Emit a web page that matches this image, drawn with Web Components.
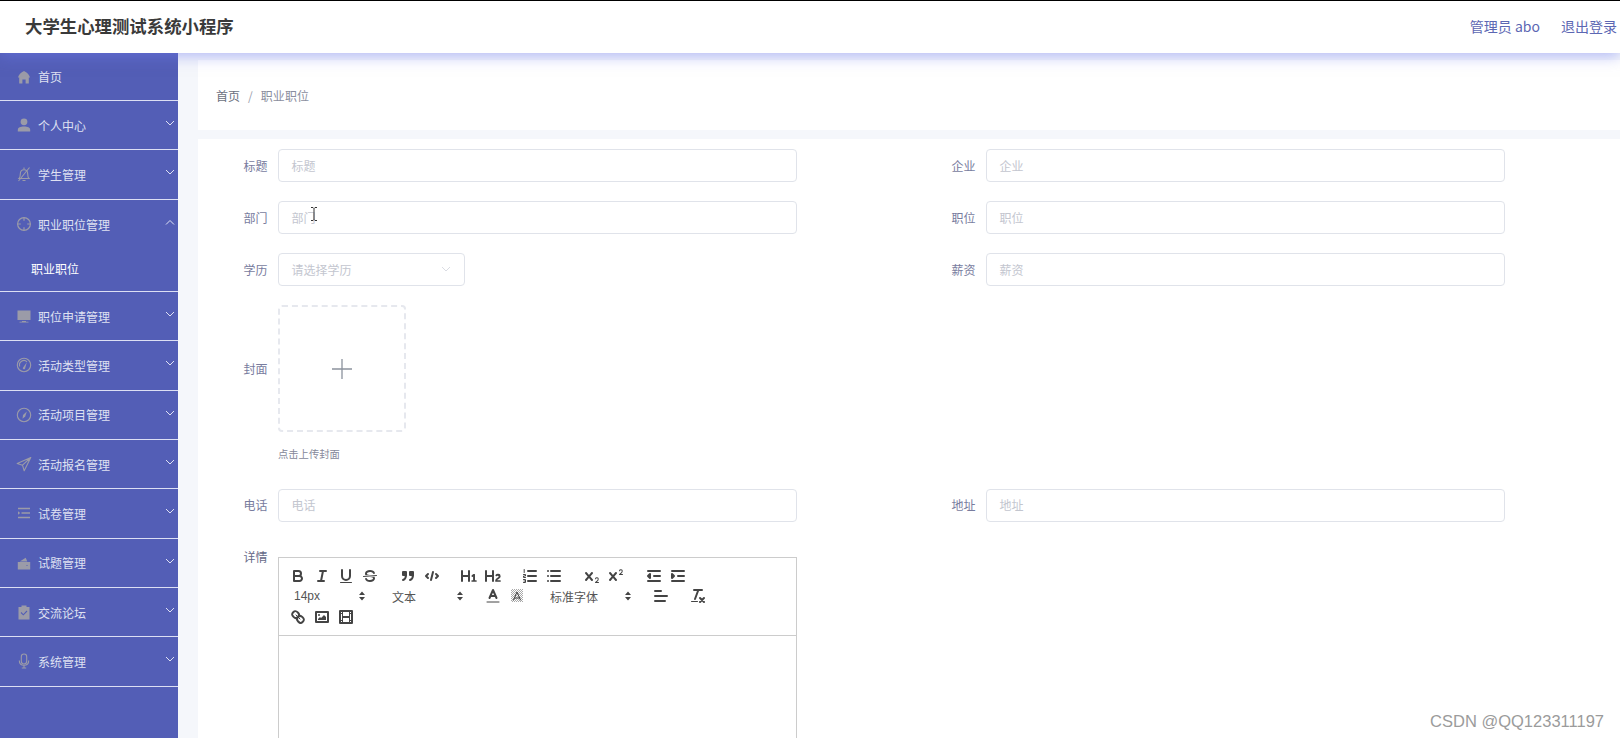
<!DOCTYPE html>
<html lang="zh">
<head>
<meta charset="utf-8">
<title>大学生心理测试系统小程序</title>
<style>
    html, body { margin: 0; height: 100%; overflow: hidden; background: #fff; }
    body { font-family: "Noto Sans CJK SC", "Liberation Sans", sans-serif; }
</style>
</head>
<body>
<app-shell>
    <app-header slot="header" title="大学生心理测试系统小程序" user="管理员 abo" logout="退出登录"></app-header>
    <side-menu slot="side">
        <menu-item first icon="home" label="首页" plain></menu-item>
        <menu-item icon="user" label="个人中心"></menu-item>
        <menu-item icon="belloff" label="学生管理"></menu-item>
        <menu-item icon="aim" label="职业职位管理" open>
            <menu-sub>职业职位</menu-sub>
        </menu-item>
        <menu-item icon="monitor" label="职位申请管理"></menu-item>
        <menu-item icon="gauge" label="活动类型管理"></menu-item>
        <menu-item icon="compass" label="活动项目管理"></menu-item>
        <menu-item icon="send" label="活动报名管理"></menu-item>
        <menu-item icon="list" label="试卷管理"></menu-item>
        <menu-item icon="wallet" label="试题管理"></menu-item>
        <menu-item icon="claim" label="交流论坛"></menu-item>
        <menu-item icon="mic" label="系统管理"></menu-item>
    </side-menu>
    <bread-crumb slot="main" home="首页" current="职业职位"></bread-crumb>
    <edit-form slot="main">
        <form-field label="标题" placeholder="标题"></form-field>
        <form-field label="企业" placeholder="企业"></form-field>
        <form-field label="部门" placeholder="部门" cursor></form-field>
        <form-field label="职位" placeholder="职位"></form-field>
        <form-field label="学历" placeholder="请选择学历" select></form-field>
        <form-field label="薪资" placeholder="薪资"></form-field>
        <upload-field class="wide" label="封面" hint="点击上传封面"></upload-field>
        <form-field class="phone" label="电话" placeholder="电话"></form-field>
        <form-field class="phone" label="地址" placeholder="地址"></form-field>
        <editor-field class="wide" label="详情"></editor-field>
    </edit-form>
</app-shell>
<water-mark>CSDN @QQ123311197</water-mark>

<script>
/* Menu icons, all on a 16 box */
const MENU_ICONS = {
    home: `<path fill="currentColor" d="M8 2C5 3.4 2.400 6 2 8.600h1.200v5.900h3.200v-4h3.200v4h3.200V8.600H14C13.600 6 11 3.400 8 2z"/>`,
    user: `<circle fill="currentColor" cx="8" cy="4.800" r="3.400"/><path fill="currentColor" d="M1.800 14.500V13c0-2.500 2.600-3.400 6.200-3.400s6.200.9 6.200 3.400v1.500z"/>`,
    belloff: `<g fill="none" stroke="currentColor" stroke-width="1.100"><path d="M3 12.500c1-1 1.300-2.200 1.300-4.500 0-2.400 1.500-4.300 3.700-4.300S11.700 5.600 11.700 8c0 2.300.3 3.500 1.300 4.500z"/><path d="M6.500 14.500h3M8 1.500v2M13.500 1.500 2.500 15"/></g>`,
    aim: `<g fill="none" stroke="currentColor" stroke-width="1.200"><circle cx="8" cy="8" r="6.400"/><path d="M8 1.600v3.200M8 11.200v3.200M1.600 8h3.200M11.200 8h3.200"/></g>`,
    monitor: `<path fill="currentColor" d="M1.500 2.500h13v9.500h-13zM6 13h4v.8h2.500v.7h-9v-.7H6z"/>`,
    gauge: `<g fill="none" stroke="currentColor" stroke-width="1.100"><circle cx="8" cy="8" r="6.700"/><path d="M3.800 9.500A4.400 4.400 0 0 1 11 4.800"/></g><path fill="currentColor" d="M10.800 5.200 9 11.800a1.200 1.200 0 0 1-2.200-.8z"/>`,
    compass: `<circle fill="none" stroke="currentColor" stroke-width="1.100" cx="8" cy="8" r="6.700"/><path fill="currentColor" d="M10.800 4.400 9.200 9.400 6.500 11.800 7 8z"/>`,
    send: `<path fill="none" stroke="currentColor" stroke-width="1.100" stroke-linejoin="round" d="M14.800 1.500 1.200 7.500l5.300 1.700 1.700 5.600zM14.800 1.500 6.500 9.200"/>`,
    list: `<path fill="currentColor" d="M2 2.800h12V4.200H2zM5.500 7.300H14v1.400H5.500zM2 11.800h12v1.400H2zM2 6.200v3.600L4.200 8z"/>`,
    wallet: `<path fill="currentColor" d="M1.800 7h12.400v7.500H1.800zM3.800 6.500 9.700 2.800l1.600 3.700zM11 9.500h3.200v2H11a1 1 0 0 1 0-2z"/><circle cx="11" cy="10.500" r=".6" fill="#535eb6"/>`,
    claim: `<path fill="currentColor" d="M2.500 3H5.500V1.500h5V3h3v12.500h-11z"/><path fill="none" stroke="#535eb6" stroke-width="1.100" d="M5 8.500l2.300 2.300L11 7"/>`,
    mic: `<g fill="none" stroke="currentColor" stroke-width="1.100"><rect x="5.300" y="1" width="5.400" height="10" rx="2.700"/><path d="M3.300 7.500c0 3 2 4.800 4.700 4.800s4.700-1.800 4.700-4.800M8 12.300v2.700M5.800 15h4.400"/></g>`,
};

/* Editor toolbar icons, drawn on an 18 box */
const QL_ICONS = {
    bold: `<path class="s" d="M5,4H9.500A2.500,2.500,0,0,1,12,6.500v0A2.500,2.500,0,0,1,9.500,9H5V4Z"/><path class="s" d="M5,9h5.500A2.500,2.500,0,0,1,13,11.500v0A2.500,2.500,0,0,1,10.500,14H5V9Z"/>`,
    italic: `<path class="s" d="M7 4H13M5 14H11M8 14 10 4"/>`,
    underline: `<path class="s" d="M5,3V9a4.012,4.012,0,0,0,4,4H9a4.012,4.012,0,0,0,4-4V3"/><rect class="f" height="1" rx="0.500" width="12" x="3" y="15"/>`,
    strike: `<path class="t" d="M15.500 8.500 2.500 9.500"/><path class="f" d="M9.007,8C6.542,7.791,6,7.519,6,6.500,6,5.792,7.283,5,9,5c1.571,0,2.765.679,2.969,1.309a1,1,0,0,0,1.900-.617C13.356,4.106,11.354,3,9,3,6.200,3,4,4.538,4,6.500a3.200,3.200,0,0,0,.5,1.843Z"/><path class="f" d="M8.984,10C11.457,10.208,12,10.479,12,11.500c0,.708-1.283,1.500-3,1.500-1.571,0-2.765-.679-2.969-1.309a1,1,0,1,0-1.900.617C4.644,13.894,6.646,15,9,15c2.800,0,5-1.538,5-3.500a3.200,3.200,0,0,0-.5-1.843Z"/>`,
    quote: `<rect class="f s" height="3" width="3" x="4" y="5"/><rect class="f s" height="3" width="3" x="11" y="5"/><path class="s" d="M7,8c0,4.031-3,5-3,5"/><path class="s" d="M14,8c0,4.031-3,5-3,5"/>`,
    code: `<path class="s" d="M5 7 3 9 5 11M13 7 15 9 13 11M10 5 8 13"/>`,
    h1: `<path class="f" d="M10,4V14a1,1,0,0,1-2,0V10H3v4a1,1,0,0,1-2,0V4A1,1,0,0,1,3,4V8H8V4a1,1,0,0,1,2,0Zm6.068,9.209H14.990V7.599a.541.541,0,0,0-.605-.605h-.627a1.011,1.011,0,0,0-.748.297L11.645,8.566a.544.544,0,0,0-.022.858l.286.308a.539.539,0,0,0,.847.033l.099-.088a1.214,1.214,0,0,0,.242-.353h.022s-.011.309-.011.605V13.209H12.041a.541.541,0,0,0-.605.605v.439a.541.541,0,0,0,.605.605h4.027a.541.541,0,0,0,.605-.605v-.439A.541.541,0,0,0,16.068,13.209Z"/>`,
    h2: `<path class="f" d="M16.740,13.814v.439a.541.541,0,0,1-.605.605H11.855a.584.584,0,0,1-.649-.605V14.013c0-2.905,3.399-3.422,3.399-4.555a.777.777,0,0,0-.847-.781,1.177,1.177,0,0,0-.836.385c-.275.264-.561.374-.858.132l-.429-.341c-.308-.242-.385-.518-.154-.814a2.972,2.972,0,0,1,2.454-1.177,2.454,2.454,0,0,1,2.684,2.409c0,2.453-3.179,2.927-3.278,3.938h2.794A.541.541,0,0,1,16.740,13.814ZM9,3A1,1,0,0,0,8,4V8H3V4A1,1,0,0,0,1,4V14a1,1,0,0,0,2,0V10H8v4a1,1,0,0,0,2,0V4A1,1,0,0,0,9,3Z"/>`,
    ol: `<path class="s" d="M7 4H15M7 9H15M7 14H15"/><path class="t" d="M3.200 2.500v3M2.500 7.500h2v1.500h-2v1.500h2M2.500 12.500h2v3h-2M3 14h1.500"/>`,
    ul: `<path class="s" d="M6 4H15M6 9H15M6 14H15M3 4h.01M3 9h.01M3 14h.01"/>`,
    sub: `<path class="f" d="M15.500,15H13.861a3.858,3.858,0,0,0,1.914-2.975,1.800,1.800,0,0,0-1.600-1.751A1.921,1.921,0,0,0,12.021,11.700a.5,.5,0,1,0,.957.291.914,.914,0,0,1,1.053-.725.81,.81,0,0,1,.744.762c0,1.076-1.170,1.870-1.940,2.431A1.456,1.456,0,0,0,12,15.500a.5,.5,0,0,0,.5.5h3A.5,.5,0,0,0,15.500,15Z"/><path class="f" d="M9.650,5.241a1,1,0,0,0-1.409.108L6,7.964,3.759,5.349A1,1,0,0,0,2.241,6.649L4.684,9.500,2.241,12.350A1,1,0,0,0,3.759,13.650L6,11.036,8.241,13.650a1,1,0,1,0,1.518-1.300L7.316,9.500,9.759,6.651A1,1,0,0,0,9.650,5.241Z"/>`,
    sup: `<path class="f" d="M15.500,7H13.861a4.015,4.015,0,0,0,1.914-2.975,1.800,1.800,0,0,0-1.600-1.751A1.922,1.922,0,0,0,12.021,3.700a.5,.5,0,1,0,.957.291.917,.917,0,0,1,1.053-.725.81,.81,0,0,1,.744.762c0,1.077-1.164,1.925-1.934,2.486A1.423,1.423,0,0,0,12,7.500a.5,.5,0,0,0,.5.5h3A.5,.5,0,0,0,15.500,7Z"/><path class="f" d="M9.650,5.241a1,1,0,0,0-1.409.108L6,7.964,3.759,5.349A1,1,0,0,0,2.241,6.649L4.684,9.500,2.241,12.350A1,1,0,0,0,3.759,13.650L6,11.036,8.241,13.650a1,1,0,1,0,1.518-1.300L7.316,9.500,9.759,6.651A1,1,0,0,0,9.650,5.241Z"/>`,
    outdent: `<path class="s" d="M3 14H15M3 4H15M9 9H15"/><polygon class="f s" points="5 7 5 11 3 9"/>`,
    indent: `<path class="s" d="M3 14H15M3 4H15M9 9H15"/><polygon class="f s" points="3 7 3 11 5 9"/>`,
    color: `<path class="s" d="M5.500 11 9 3 12.500 11M11.630 9H6.380"/><path class="t" d="M3 15H15"/>`,
    background: `<rect x="3" y="2" width="12" height="13" fill="url(#hatch)"/><path class="t" d="M5.500 13 9 5 12.500 13M11.630 11H6.380"/>`,
    align: `<path class="s" d="M3 9H15M3 14H13M3 4H9"/>`,
    clean: `<path class="s" d="M5 3H13M6 12 9.350 3M11 11 15 15M15 11 11 15"/><rect class="f" rx="0.500" height="1" width="7" x="2" y="14"/>`,
    link: `<path class="t" d="M7 7 11 11"/><path class="s" d="M8.900,4.577a3.476,3.476,0,0,1,.36,4.679A3.476,3.476,0,0,1,4.577,8.900C3.185,7.500,2.035,6.400,4.217,4.217S7.500,3.185,8.900,4.577Z"/><path class="s" d="M13.423,9.100a3.476,3.476,0,0,0-4.679-.36,3.476,3.476,0,0,0,.36,4.679c1.392,1.392,2.500,2.542,4.679.36S14.815,10.500,13.423,9.100Z"/>`,
    image: `<rect class="s" height="10" width="12" x="3" y="4"/><circle class="f" cx="6" cy="7" r="1"/><polygon class="f" points="5 12 5 11 7 9 8 10 11 7 13 9 13 12 5 12"/>`,
    video: `<rect class="s" height="12" width="12" x="3" y="3"/><rect class="f" height="12" width="1" x="5" y="3"/><rect class="f" height="12" width="1" x="12" y="3"/><rect class="f" height="2" width="8" x="5" y="8"/><rect class="f" height="1" width="3" x="3" y="5"/><rect class="f" height="1" width="3" x="3" y="12"/><rect class="f" height="1" width="3" x="12" y="5"/><rect class="f" height="1" width="3" x="12" y="12"/>`,
};

const define = (name, render) => {
    customElements.define(name, class extends HTMLElement {
        constructor() {
            super();
            this.attachShadow({ mode: 'open' });
        }
        connectedCallback() {
            this.shadowRoot.innerHTML = render(this);
        }
    });
};

define('app-shell', () => `
    <style>
        :host { display: block; border-top: 1px solid #000; height: 738px; overflow: hidden; box-sizing: border-box; background: #f5f7fb; }
        .top { position: relative; z-index: 2; }
        .body { display: grid; grid-template-columns: 178px 1fr; height: 685px; overflow: hidden; }
        main { padding: 7px 0 0 20px; min-width: 0; display: flex; flex-direction: column; gap: 9px; }
    </style>
    <div class="top"><slot name="header"></slot></div>
    <div class="body">
        <slot name="side"></slot>
        <main><slot name="main"></slot></main>
    </div>
`);

define('app-header', (el) => `
    <style>
        :host { display: flex; align-items: center; height: 52px; padding: 0 3px 2px 25px; box-sizing: border-box; background: #fff; box-shadow: 0 3px 14px rgba(110, 122, 240, 0.5); }
        h1 { margin: 0; flex: 1; font: 700 17.400px/1 "Noto Sans CJK SC", sans-serif; color: #3a3a3a; }
        span { font-size: 14px; color: #5c67b3; font-family: "Noto Sans CJK SC", sans-serif; }
        .user { margin-right: 21px; }
    </style>
    <h1>${el.getAttribute('title')}</h1>
    <span class="user">${el.getAttribute('user')}</span>
    <span>${el.getAttribute('logout')}</span>
`);

define('side-menu', () => `
    <style>
        :host { display: block; width: 178px; height: 685px; background: #535eb6; font: 12px "Noto Sans CJK SC", sans-serif; }
    </style>
    <slot></slot>
`);

define('menu-item', (el) => {
    const open = el.hasAttribute('open');
    const chevron = el.hasAttribute('plain') ? '' : `
        <svg class="chev" viewBox="0 0 10 6" width="10" height="6"><path fill="none" stroke="#dfe1f4" stroke-width="1" d="${open ? 'M1 5.500 5 1.500 9 5.500' : 'M1 1 5 5 9 1'}"/></svg>`;
    const height = el.hasAttribute('first') ? 48 : 49.330;
    return `
    <style>
        :host { display: block; box-sizing: border-box; ${open ? '' : 'border-bottom: 1px solid #dcdff4;'} }
        .row { display: flex; align-items: center; height: ${height - (open ? 0 : 1)}px; padding: 0 3px 0 16px; color: #dfe1f2; }
        .icon { width: 16px; height: 16px; color: #9b9ba8; flex: none; margin-right: 6px; }
        .label { flex: 1; }
        .chev { margin-bottom: 4px; }
    </style>
    <div class="row">
        <svg class="icon" viewBox="0 0 16 16">${MENU_ICONS[el.getAttribute('icon')]}</svg>
        <span class="label">${el.getAttribute('label')}</span>${chevron}
    </div>
    <slot></slot>`;
});

define('menu-sub', () => `
    <style>
        :host { display: flex; align-items: center; height: 43px; box-sizing: border-box; padding: 0 0 2px 31px; color: #fff; border-bottom: 1px solid #dcdff4; }
    </style>
    <slot></slot>
`);

define('bread-crumb', (el) => `
    <style>
        :host { display: flex; align-items: center; height: 70px; flex: none; background: #fff; padding: 0 0 0 18px; font: 12px "Noto Sans CJK SC", sans-serif; color: #8a8e9e; }
        b { font-weight: 400; color: #6b7080; }
        i { font-style: normal; margin: 0 8px; color: #9aa0ad; }
        span { letter-spacing: .1px; }
    </style>
    <b>${el.getAttribute('home')}</b><i>/</i><span>${el.getAttribute('current')}</span>
`);

define('edit-form', () => `
    <style>
        :host { display: grid; grid-template-columns: 708px 1fr; row-gap: 19px; align-content: start; flex: 1; background: #fff; padding-top: 10px; }
        ::slotted(.wide) { grid-column: 1 / 3; }
        ::slotted(.phone) { margin-top: 7.500px; }
    </style>
    <slot></slot>
`);

const FIELD_STYLES = `
    :host { display: flex; font: 12px "Noto Sans CJK SC", sans-serif; }
    .lab { width: 69.500px; padding-right: 10.500px; text-align: right; color: #787c9e; flex: none; }
`;

define('form-field', (el) => {
    const select = el.hasAttribute('select');
    return `
    <style>
        ${FIELD_STYLES}
        :host { align-items: center; height: 33px; }
        .lab { margin-bottom: 1px; }
        .box { position: relative; display: flex; align-items: center; justify-content: space-between; box-sizing: border-box; width: ${select ? 187 : 519}px; height: 33px; padding: 0 13px 1px 12.500px; border: 1px solid #e0e3ea; border-radius: 4px; color: #c3c6cf; }
        .cursor { position: absolute; left: 31px; top: 4px; }
    </style>
    <span class="lab">${el.getAttribute('label')}</span>
    <div class="box">
        <span>${el.getAttribute('placeholder')}</span>
        ${select ? '<svg viewBox="0 0 10 6" width="10" height="6"><path fill="none" stroke="#dadce3" d="M1 1 5 5 9 1"/></svg>' : ''}
        ${el.hasAttribute('cursor') ? '<svg class="cursor" viewBox="0 0 8 16" width="8" height="16"><path fill="none" stroke="#333" d="M1 1.500h2l1 1 1-1h2M4 2.500v11M1 14.500h2l1-1 1 1h2"/></svg>' : ''}
    </div>`;
});

define('upload-field', (el) => `
    <style>
        ${FIELD_STYLES}
        :host { flex-wrap: wrap; align-items: center; }
        .box { display: flex; align-items: center; justify-content: center; box-sizing: border-box; width: 128px; height: 127px; border: 2px dashed #e6e8ee; border-radius: 4px; }
        .hint { flex-basis: 100%; margin: 14px 0 0 80px; font-size: 10.300px; line-height: 16px; color: #85889a; }
    </style>
    <span class="lab">${el.getAttribute('label')}</span>
    <div class="box">
        <svg viewBox="0 0 20 20" width="20" height="20"><path stroke="#8c939d" stroke-width="1.300" d="M10 0v20M0 10h20"/></svg>
    </div>
    <div class="hint">${el.getAttribute('hint')}</div>
`);

define('editor-field', (el) => `
    <style>
        ${FIELD_STYLES}
        :host { align-items: flex-start; margin-top: 16px; }
        .lab { line-height: 1; margin-top: -6px; color: #666a88; }
        .ed { box-sizing: border-box; width: 519px; height: 400px; border: 1px solid #ccc; }
    </style>
    <span class="lab">${el.getAttribute('label')}</span>
    <div class="ed">
        <ql-toolbar></ql-toolbar>
    </div>
`);

const btn = (name, left = 0) => `<svg class="b" style="margin-left:${left}px" viewBox="0 0 18 18" width="18" height="18">${QL_ICONS[name]}</svg>`;
const picker = (text, width, left = 0) => `<span class="p" style="width:${width}px;margin-left:${left}px">${text}
    <svg viewBox="0 0 8 12" width="8" height="12"><path fill="#444" d="M4 1.500 7 5H1zM4 10.500 1 7h6z"/></svg></span>`;

define('ql-toolbar', () => `
    <style>
        :host { display: block; box-sizing: border-box; height: 78px; padding: 8px 0 0 7px; border-bottom: 1px solid #ccc; font: 12px "Liberation Sans", "Noto Sans CJK SC", sans-serif; color: #555; }
        .row { display: flex; align-items: center; height: 20.500px; }
        .b { box-sizing: content-box; padding: 0 3px; flex: none; }
        .p { display: flex; align-items: center; justify-content: space-between; box-sizing: border-box; height: 20px; padding: 0 8px; flex: none; }
        .s { fill: none; stroke: #444; stroke-width: 2; stroke-linecap: round; stroke-linejoin: round; }
        .t { fill: none; stroke: #444; stroke-width: 1; stroke-linecap: round; }
        .f { fill: #444; }
    </style>
    <svg width="0" height="0" style="position:absolute"><defs><pattern id="hatch" width="2" height="2" patternUnits="userSpaceOnUse"><rect width="1" height="1" fill="#aaa"/><rect x="1" y="1" width="1" height="1" fill="#aaa"/></pattern></defs></svg>
    <div class="row">
        ${btn('bold')}${btn('italic')}${btn('underline')}${btn('strike')}
        ${btn('quote', 14)}${btn('code')}
        ${btn('h1', 13)}${btn('h2')}
        ${btn('ol', 13)}${btn('ul')}
        ${btn('sub', 14)}${btn('sup')}
        ${btn('outdent', 14)}${btn('indent')}
    </div>
    <div class="row">
        ${picker('14px', 88)}
        ${picker('文本', 88, 10)}
        ${btn('color', 9)}${btn('background')}
        ${picker('标准字体', 98, 13)}
        ${btn('align', 9)}${btn('clean', 13)}
    </div>
    <div class="row">
        ${btn('link')}${btn('image')}${btn('video')}
    </div>
`);

define('water-mark', () => `
    <style>
        :host { position: absolute; right: 16px; bottom: 7px; font: 16.500px/20px "Liberation Sans", sans-serif; color: #9b9b9b; }
    </style>
    <slot></slot>
`);
</script>
</body>
</html>
